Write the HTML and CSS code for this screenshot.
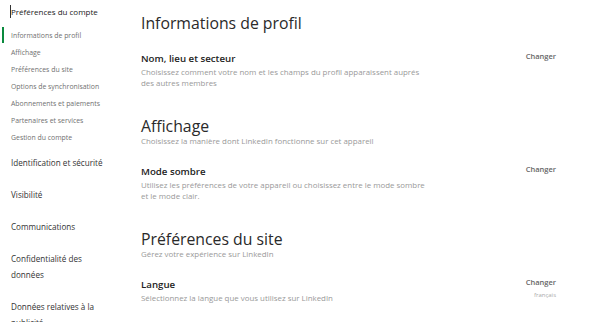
FILE: index.html
```html
<html lang="fr">

<head>
    <meta charset="UTF-8">
    <meta name="viewport" content="width=device-width, initial-scale=1.0">
    <title>Préférences</title>
    <link rel="stylesheet" href="styles.css">
</head>

<body>
    <div class="layout">
        <nav class="sidebar">
            <h2 class="nav-title">Préférences du compte</h2>
            <ul class="subnav">
                <li class="active">Informations de profil</li>
                <li>Affichage</li>
                <li>Préférences du site</li>
                <li>Options de synchronisation</li>
                <li>Abonnements et paiements</li>
                <li>Partenaires et services</li>
                <li>Gestion du compte</li>
            </ul>
            <ul class="mainnav">
                <li>Identification et sécurité</li>
                <li>Visibilité</li>
                <li>Communications</li>
                <li>Confidentialité des données</li>
                <li>Données relatives à la publicité</li>
            </ul>
        </nav>
        <main class="content">
            <section class="group">
                <h1>Informations de profil</h1>
                <div class="setting">
                    <div class="setting-text">
                        <h3>Nom, lieu et secteur</h3>
                        <p>Choisissez comment votre nom et les champs du profil apparaissent auprés des&nbsp;autres membres</p>
                    </div>
                    <div class="setting-action">
                        <a>Changer</a>
                    </div>
                </div>
            </section>
            <section class="group">
                <h1>Affichage</h1>
                <p class="group-sub">Choisissez la manière dont LinkedIn fonctionne sur cet appareil</p>
                <div class="setting">
                    <div class="setting-text">
                        <h3>Mode sombre</h3>
                        <p>Utilisez les préférences de votre appareil ou choisissez entre le mode sombre et le mode clair.</p>
                    </div>
                    <div class="setting-action">
                        <a>Changer</a>
                    </div>
                </div>
            </section>
            <section class="group">
                <h1>Préférences du site</h1>
                <p class="group-sub">Gérez votre expérience sur LinkedIn</p>
                <div class="setting">
                    <div class="setting-text">
                        <h3>Langue</h3>
                        <p>Sélectionnez la langue que vous utilisez sur LinkedIn</p>
                    </div>
                    <div class="setting-action">
                        <a>Changer</a>
                        <span class="value">français</span>
                    </div>
                </div>
            </section>
        </main>
    </div>
</body>

</html>
```

FILE: styles.css
```css
body {
    margin: 0;
    font-family: "Open Sans", "Noto Sans", sans-serif;
    color: #333;
    background: #fff;
    overflow: hidden;
}

ul {
    list-style: none;
    margin: 0;
    padding: 0;
}

.layout {
    display: flex;
    height: 322px;
}

.sidebar {
    width: 130px;
    flex-shrink: 0;
    padding-top: 4px;
}

.nav-title {
    position: relative;
    margin: 0 0 0 11px;
    font-size: 8px;
    font-weight: 400;
    line-height: 16px;
    color: #222;
}

/* text caret left in the heading */
.nav-title::before {
    content: "";
    position: absolute;
    left: -1px;
    top: 1px;
    width: 1px;
    height: 13px;
    background-color: #333;
}

.subnav {
    margin-top: 7px;
}

.subnav li {
    position: relative;
    padding-left: 11px;
    font-size: 6.9px;
    line-height: 17px;
    color: #707070;
}

.subnav li.active::before {
    content: "";
    position: absolute;
    left: 2px;
    top: 0;
    width: 2px;
    height: 16px;
    background-color: #0a8a3e;
}

.mainnav {
    margin-top: 9px;
}

.mainnav li {
    padding-left: 11px;
    padding-right: 20px;
    font-size: 8.15px;
    line-height: 16px;
    color: #333;
    margin-bottom: 16px;
}

.content {
    flex: 1;
    padding: 12px 44px 0 11px;
}

.group {
    margin-bottom: 26px;
}

h1 {
    margin: 0;
    font-size: 15.8px;
    font-weight: 400;
    line-height: 22px;
    color: #2a2a2a;
}

.group-sub {
    margin: -2px 0 0;
    font-size: 7.9px;
    line-height: 12px;
    color: #999;
}

.setting {
    display: flex;
    justify-content: space-between;
    margin-top: 17px;
}

.setting-text {
    width: 292px;
}

h3 {
    margin: 0;
    font-size: 9.7px;
    font-weight: 600;
    line-height: 16px;
    color: #222;
}

.setting-text p {
    margin: 0;
    font-size: 7.9px;
    line-height: 11px;
    color: #999;
}

.setting-action {
    display: flex;
    flex-direction: column;
    align-items: flex-end;
}

.setting-action a {
    font-size: 7.5px;
    font-weight: 600;
    line-height: 11px;
    color: #666;
    cursor: pointer;
}

.value {
    margin-top: 3px;
    font-size: 6px;
    line-height: 9px;
    color: #aaa;
}
```
